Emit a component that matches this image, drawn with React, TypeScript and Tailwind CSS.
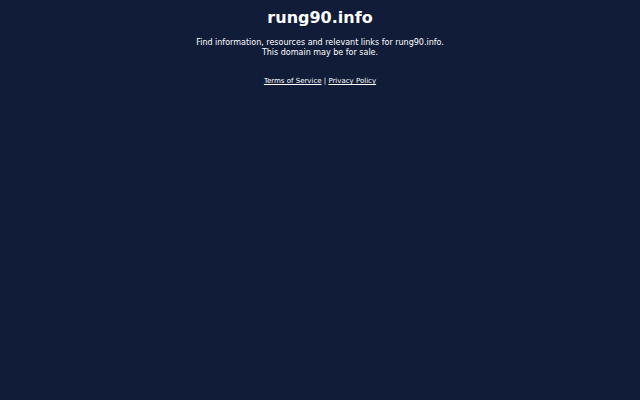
export default function App() {
  return (
    <div className="w-[640px] h-[400px] bg-[#101c38] text-white font-['DejaVu_Sans',sans-serif] flex flex-col items-center">
      <h1 className="text-[16px] font-bold leading-[20px] mt-[8px]">rung90.info</h1>
      <p className="text-[8px] leading-[10px] text-center mt-[10px]">
        Find information, resources and relevant links for rung90.info.
        <br />
        This domain may be for sale.
      </p>
      <div className="text-[7px] leading-[10px] mt-[18px]">
        <a href="#" className="underline">Terms of Service</a> | <a href="#" className="underline">Privacy Policy</a>
      </div>
    </div>
  );
}
